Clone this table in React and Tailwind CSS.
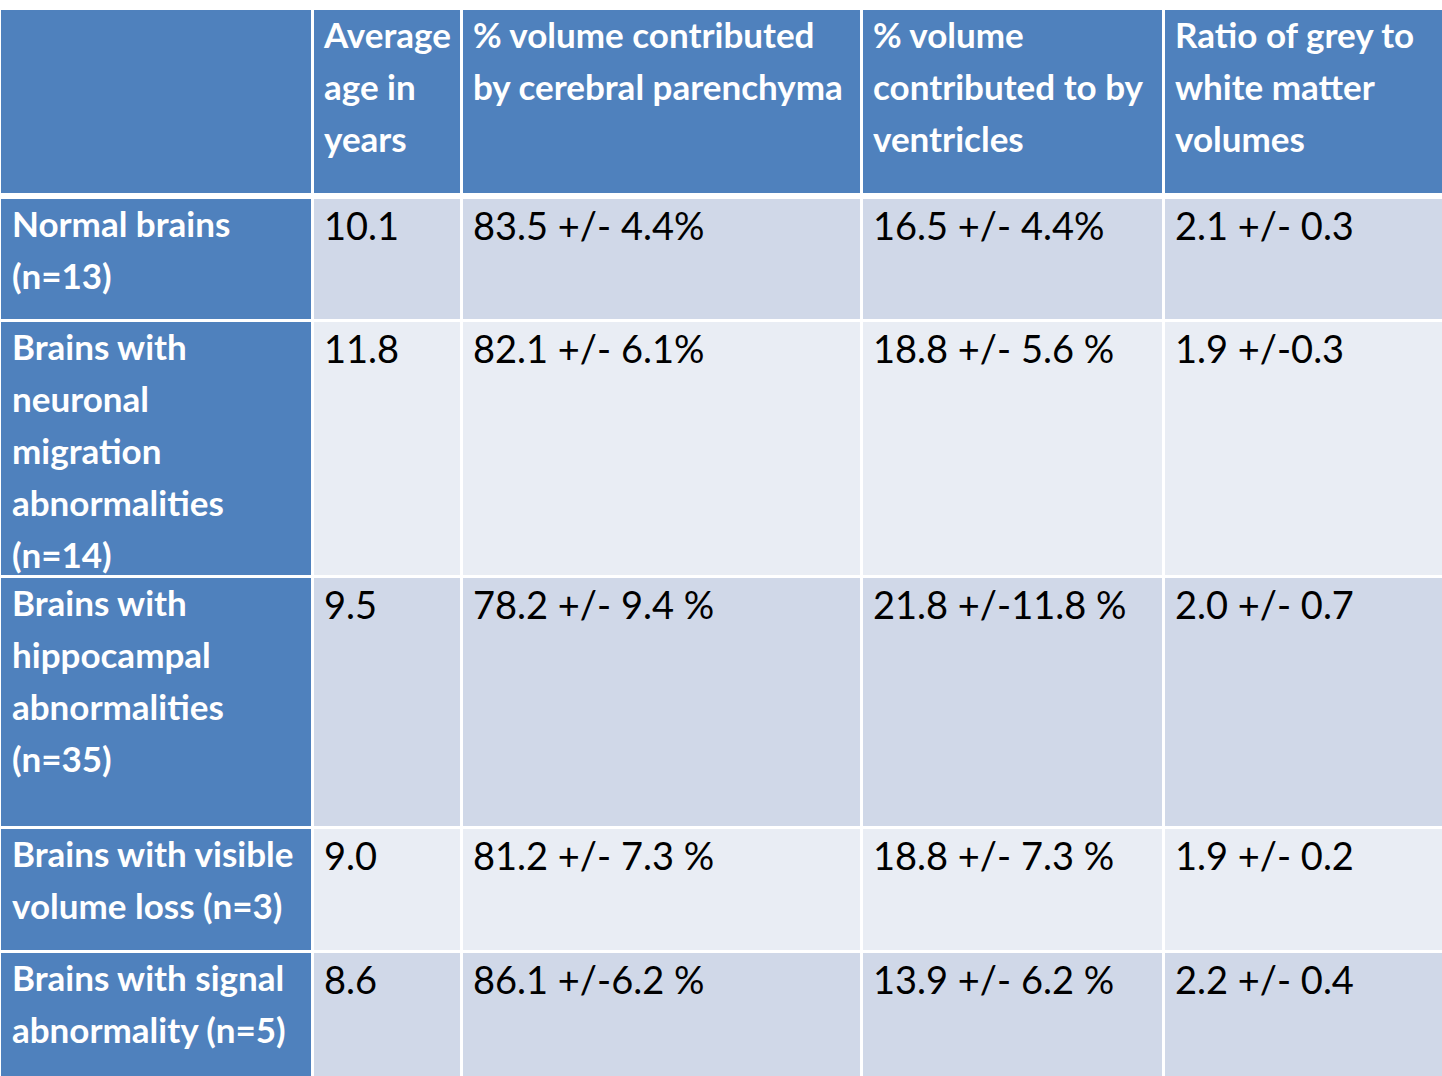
import React from "react";

const header = [
  ["Average", "age in", "years"],
  ["% volume contributed", "by cerebral parenchyma"],
  ["% volume", "contributed to by", "ventricles"],
  ["Ratio of grey to", "white matter", "volumes"],
];

const rows = [
  {
    h: "h-[120px]",
    bg: "bg-[#d0d8e8]",
    label: ["Normal brains", "(n=13)"],
    vals: ["10.1", "83.5 +/- 4.4%", "16.5 +/- 4.4%", "2.1 +/- 0.3"],
  },
  {
    h: "h-[253px]",
    bg: "bg-[#e9edf4]",
    label: ["Brains with", "neuronal", "migration", "abnormalities", "(n=14)"],
    vals: ["11.8", "82.1 +/- 6.1%", "18.8 +/- 5.6 %", "1.9 +/-0.3"],
  },
  {
    h: "h-[248px]",
    bg: "bg-[#d0d8e8]",
    label: ["Brains with", "hippocampal", "abnormalities", "(n=35)"],
    vals: ["9.5", "78.2 +/- 9.4 %", "21.8 +/-11.8 %", "2.0 +/- 0.7"],
  },
  {
    h: "h-[121px]",
    bg: "bg-[#e9edf4]",
    label: ["Brains with visible", "volume loss (n=3)"],
    vals: ["9.0", "81.2 +/- 7.3 %", "18.8 +/- 7.3 %", "1.9 +/- 0.2"],
  },
  {
    h: "h-[123px]",
    bg: "bg-[#d0d8e8]",
    label: ["Brains with signal", "abnormality (n=5)"],
    vals: ["8.6", "86.1 +/-6.2 %", "13.9 +/- 6.2 %", "2.2 +/- 0.4"],
  },
];

const cols = "grid grid-cols-[310px_146px_397px_299px_277px] gap-x-[3px]";

function Lines({ lines }) {
  return (
    <div className="-mt-[2px]">
      {lines.map((l, i) => (
        <div key={i} className="whitespace-nowrap">
          {l}
        </div>
      ))}
    </div>
  );
}

export default function App() {
  return (
    <div className="w-[1442px] h-[1076px] overflow-hidden bg-white pt-[10px] pl-[1px] font-['Lato',sans-serif]">
      <div className="flex flex-col gap-[3px]">
        <div className={`${cols} h-[183px] mb-[3px]`}>
          <div className="bg-[#4f81bd]" />
          {header.map((lines, i) => (
            <div
              key={i}
              className="bg-[#4f81bd] text-white font-bold text-[35px] leading-[52px] pl-[10px] pr-[8px] overflow-hidden"
            >
              <Lines lines={lines} />
            </div>
          ))}
        </div>
        {rows.map((r, ri) => (
          <div key={ri} className={`${cols} ${r.h}`}>
            <div className="bg-[#4f81bd] text-white font-bold text-[35px] leading-[52px] pl-[11px] pr-[8px] overflow-hidden">
              <Lines lines={r.label} />
            </div>
            {r.vals.map((v, vi) => (
              <div
                key={vi}
                className={`${r.bg} text-black text-[38px] leading-[52px] pl-[10px] pr-[8px] whitespace-nowrap overflow-hidden`}
              >
                {v}
              </div>
            ))}
          </div>
        ))}
      </div>
    </div>
  );
}
